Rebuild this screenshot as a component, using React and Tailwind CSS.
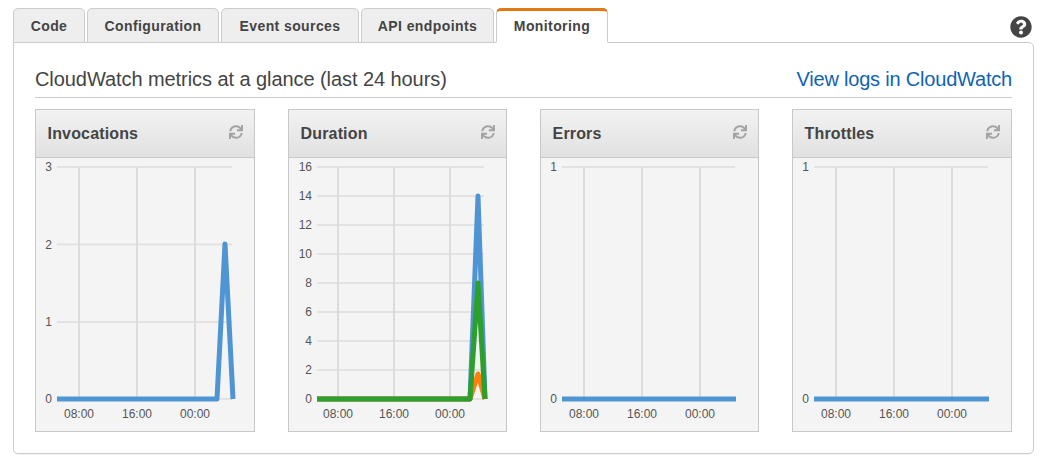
import React from "react";
import { FaSync, FaQuestionCircle } from "react-icons/fa";

const tabs = [
  { label: "Code", w: "w-[72px]" },
  { label: "Configuration", w: "w-[132px]" },
  { label: "Event sources", w: "w-[138px]" },
  { label: "API endpoints", w: "w-[133px]" },
];

const BLUE = "#5095d3";
const ORANGE = "#ff7f0e";
const GREEN = "#2ca02c";
const BOTTOM = 241; // y of the zero line, inside the chart svg

const charts = [
  {
    title: "Invocations",
    yLabels: [
      ["3", 9],
      ["2", 86.5],
      ["1", 164],
      ["0", 241],
    ],
    gridFrom: 21,
    gridTo: 196,
    vertical: [43, 101, 159],
    series: [{ color: BLUE, points: `21,${BOTTOM} 181,${BOTTOM} 189,86 197,${BOTTOM}` }],
  },
  {
    title: "Duration",
    yLabels: [
      ["16", 9],
      ["14", 38],
      ["12", 67],
      ["10", 96],
      ["8", 125],
      ["6", 154],
      ["4", 183],
      ["2", 212],
      ["0", 241],
    ],
    gridFrom: 28,
    gridTo: 195,
    vertical: [49, 105, 161],
    series: [
      { color: BLUE, points: `28,${BOTTOM} 181,${BOTTOM} 189,38 196,${BOTTOM}` },
      { color: ORANGE, points: `28,${BOTTOM} 181,${BOTTOM} 189,216 196,${BOTTOM}` },
      { color: GREEN, points: `28,${BOTTOM} 181,${BOTTOM} 189,125 196,${BOTTOM}` },
    ],
  },
  {
    title: "Errors",
    yLabels: [
      ["1", 9],
      ["0", 241],
    ],
    gridFrom: 21,
    gridTo: 194,
    vertical: [43, 101, 159],
    series: [{ color: BLUE, points: `21,${BOTTOM} 195,${BOTTOM}` }],
  },
  {
    title: "Throttles",
    yLabels: [
      ["1", 9],
      ["0", 241],
    ],
    gridFrom: 21,
    gridTo: 195,
    vertical: [43, 101, 159],
    series: [{ color: BLUE, points: `21,${BOTTOM} 196,${BOTTOM}` }],
  },
];

function Chart({ chart }) {
  const labelX = chart.gridFrom - 5;
  return (
    <svg width="218" height="274" className="block" style={{ fontFamily: "'Liberation Sans', sans-serif" }}>
      {chart.yLabels.map(([label, y]) => (
        <g key={label}>
          <line x1={chart.gridFrom} x2={chart.gridTo} y1={y} y2={y} stroke="#e2e2e2" strokeWidth="2" />
          <text x={labelX} y={y + 4} textAnchor="end" fontSize="12" fill="#555">
            {label}
          </text>
        </g>
      ))}
      {chart.vertical.map((x, i) => (
        <g key={x}>
          <line x1={x} x2={x} y1={9} y2={BOTTOM} stroke="#dcdcdc" strokeWidth="2" />
          <text x={x} y={260} textAnchor="middle" fontSize="12" fill="#555">
            {["08:00", "16:00", "00:00"][i]}
          </text>
        </g>
      ))}
      {chart.series.map((s) => (
        <polyline
          key={s.color}
          points={s.points}
          fill="none"
          stroke={s.color}
          strokeWidth="5"
          strokeLinejoin="round"
        />
      ))}
    </svg>
  );
}

function MetricCard({ chart }) {
  return (
    <div className="border border-[#c8c8c8] bg-[#f4f4f4] h-[323px] overflow-hidden">
      <div className="h-[48px] flex justify-between bg-gradient-to-b from-[#f2f2f2] to-[#e1e1e1] border-b border-[#c8c8c8] pl-[11.6px] pr-[11px]">
        <span className="mt-[14px] text-[16px] leading-[20px] font-bold text-[#444] tracking-[0.15px]">{chart.title}</span>
        <FaSync className="mt-[15px] text-[#a3a3a3]" size={14} />
      </div>
      <Chart chart={chart} />
    </div>
  );
}

export default function App() {
  return (
    <div className="w-[1050px] h-[469px] bg-white pt-[8px] pl-[13px] pr-[16px] font-['Liberation_Sans',Arial,sans-serif]">
      <div className="flex justify-between items-start h-[35px] -mb-px relative">
        <div className="flex gap-[2px]">
          {tabs.map((tab) => (
            <div
              key={tab.label}
              className={`${tab.w} h-[35px] pt-[2px] flex items-center justify-center bg-[#eeeeee] border border-[#cccccc] rounded-t-[5px] text-[14px] font-bold text-[#444] tracking-[0.4px]`}
            >
              {tab.label}
            </div>
          ))}
          <div className="w-[112px] h-[35px] flex items-center justify-center bg-white border border-[#cccccc] border-b-white border-t-[3px] border-t-[#e47911] rounded-t-[5px] text-[14px] font-bold text-[#444] tracking-[0.4px] relative z-10">
            Monitoring
          </div>
        </div>
        <FaQuestionCircle className="mt-[8px] mr-[2px] text-[#444]" size={22} />
      </div>
      <div className="h-[412px] border border-[#cccccc] rounded-b-[5px] rounded-tr-[5px] shadow-[0_1px_1px_rgba(0,0,0,0.05)] px-[21px] pt-[22px]">
        <div className="flex justify-between items-center h-[33px] border-b border-[#cccccc] pb-[5px]">
          <h2 className="text-[20px] text-[#444] tracking-[-0.07px]">CloudWatch metrics at a glance (last 24 hours)</h2>
          <a className="text-[20px] text-[#0f63b5] tracking-[-0.2px]">View logs in CloudWatch</a>
        </div>
        <div className="grid grid-cols-[220px_219px_219px_220px] gap-[33px] mt-[11px]">
          {charts.map((chart) => (
            <MetricCard key={chart.title} chart={chart} />
          ))}
        </div>
      </div>
    </div>
  );
}
